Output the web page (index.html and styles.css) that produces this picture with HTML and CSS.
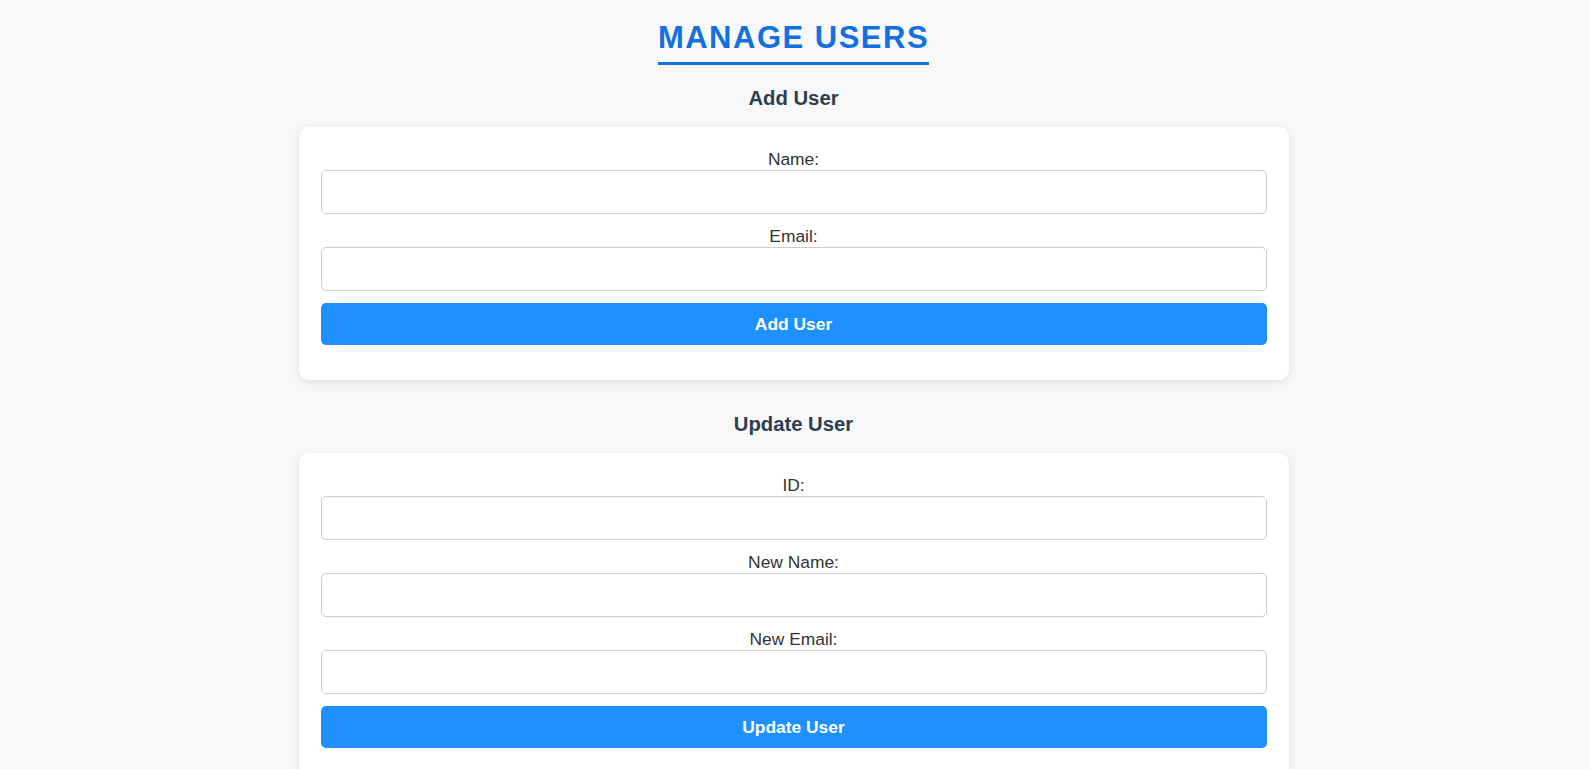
FILE: index.html
```html
<!DOCTYPE html>
<html lang="en">
<head>
<meta charset="UTF-8">
<title>Manage Users</title>
<link rel="stylesheet" href="styles.css">
</head>
<body>
  <header class="page-header">
    <h1 class="page-title">MANAGE USERS</h1>
  </header>

  <main class="content">
    <section class="section">
      <h2 class="section-title first">Add User</h2>
      <form class="card">
        <label class="field-label" for="add-name">Name:</label>
        <input class="field-input" id="add-name" type="text">
        <label class="field-label" for="add-email">Email:</label>
        <input class="field-input" id="add-email" type="email">
        <button class="btn" type="button">Add User</button>
      </form>
    </section>

    <section class="section">
      <h2 class="section-title">Update User</h2>
      <form class="card">
        <label class="field-label" for="upd-id">ID:</label>
        <input class="field-input" id="upd-id" type="text">
        <label class="field-label" for="upd-name">New Name:</label>
        <input class="field-input" id="upd-name" type="text">
        <label class="field-label" for="upd-email">New Email:</label>
        <input class="field-input" id="upd-email" type="email">
        <button class="btn" type="button">Update User</button>
      </form>
    </section>
  </main>
</body>
</html>
```

FILE: styles.css
```css
html {
  background: #f8f8f8;
}

body {
  margin: 0;
  padding: 0 3px 20px 0;
  background: #f8f8f8;
  font-family: "Liberation Sans", Arial, Helvetica, sans-serif;
  color: #333;
}

.page-header {
  display: flex;
  justify-content: center;
  padding-top: 20px;
}

.page-title {
  margin: 0;
  font-size: 31px;
  line-height: 36px;
  font-weight: bold;
  letter-spacing: 1.5px;
  color: #1271df;
  padding-bottom: 6px;
  border-bottom: 3px solid #1271df;
}

.content {
  display: flex;
  flex-direction: column;
  align-items: center;
}

.section {
  width: 990px;
  display: flex;
  flex-direction: column;
}

.section-title {
  margin: 33px 0 17px;
  font-size: 20.3px;
  line-height: 23px;
  font-weight: bold;
  color: #2c3e50;
  text-align: center;
}

.section-title.first {
  margin-top: 22px;
}

.card {
  display: flex;
  flex-direction: column;
  background: #fff;
  border-radius: 10px;
  box-shadow: 0 2px 10px rgba(0, 0, 0, 0.1);
  padding: 22px 22px 35px;
  margin: 0;
  box-sizing: border-box;
}

.field-label {
  display: block;
  font-size: 17.4px;
  line-height: 20px;
  margin-bottom: 1px;
  text-align: center;
  color: #333;
}

.field-input {
  height: 44px;
  box-sizing: border-box;
  border: 1px solid #ccc;
  border-radius: 5px;
  background: #fff;
  padding: 0 10px;
  font-size: 16px;
  font-family: inherit;
  margin: 0 0 12px;
}

.btn {
  height: 42px;
  border: none;
  border-radius: 5px;
  background: #1e90ff;
  color: #fff;
  font-family: inherit;
  font-size: 17.4px;
  font-weight: bold;
  cursor: pointer;
}
```
